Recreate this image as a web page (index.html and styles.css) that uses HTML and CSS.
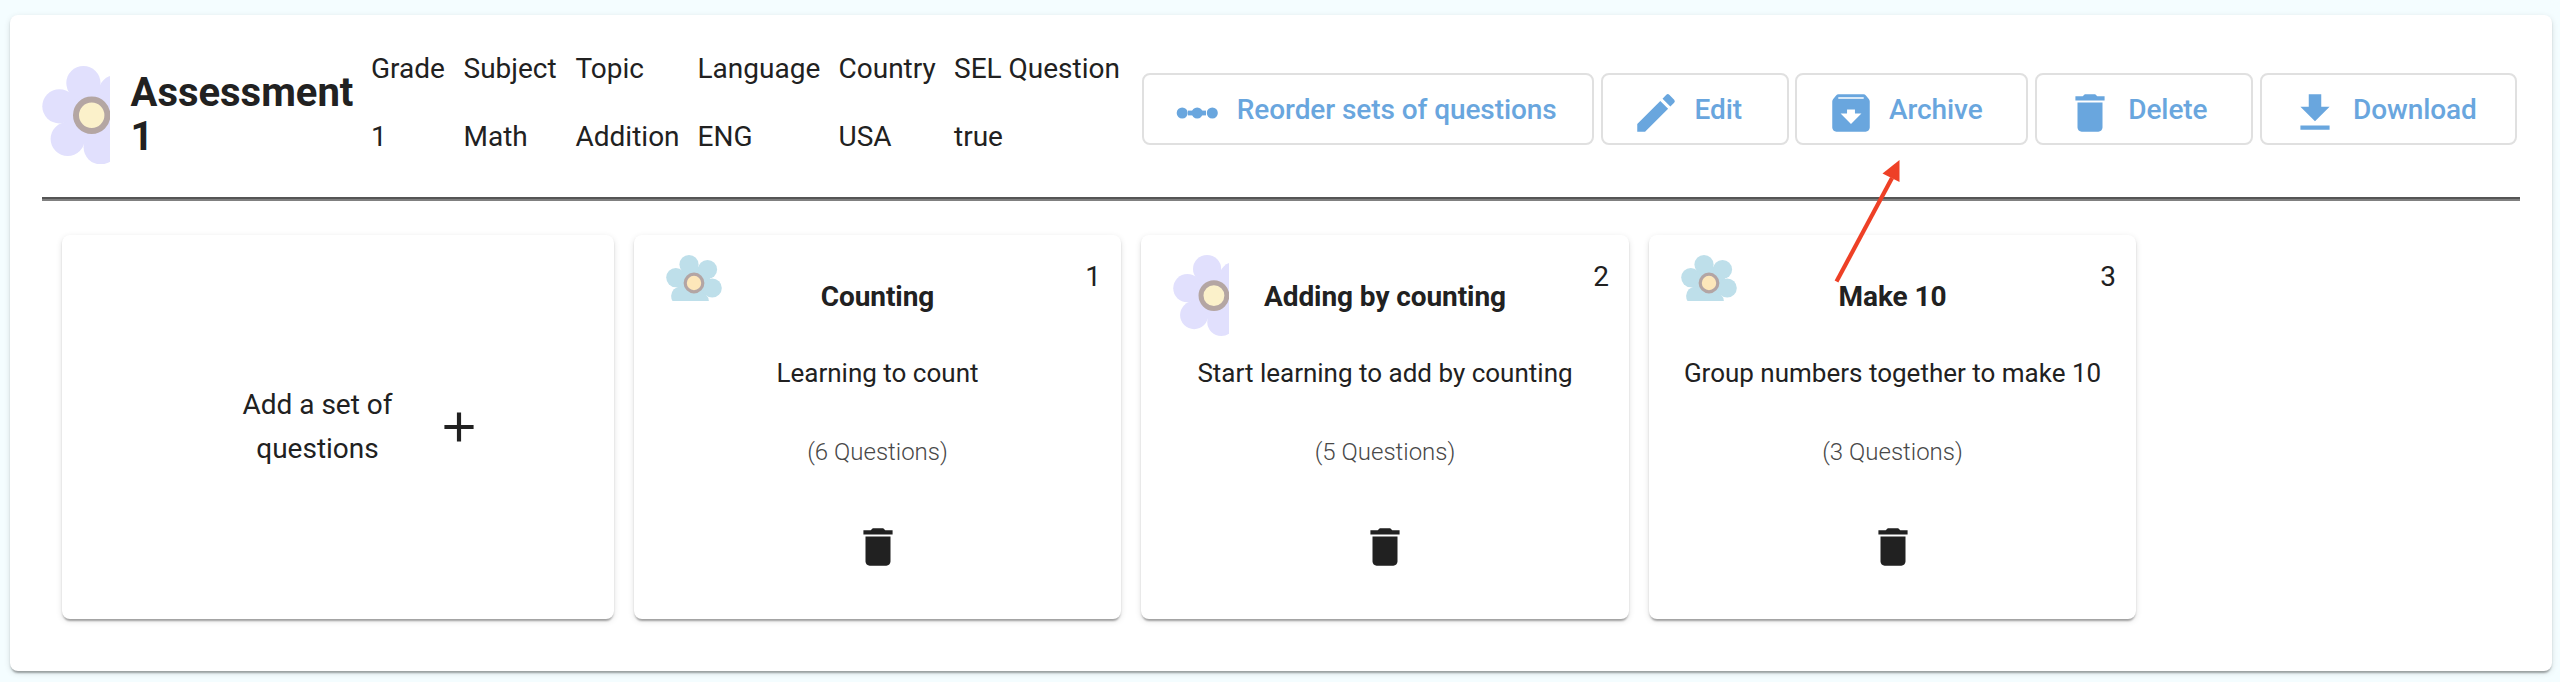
FILE: index.html
```
<!DOCTYPE html>
<html lang="en">
<head>
<meta charset="utf-8">
<title>Assessment 1</title>
<link rel="stylesheet" href="styles.css">
</head>
<body>
<svg class="defs" aria-hidden="true">
  <symbol id="flower-violet" viewBox="0 0 68 98.4">
    <g fill="#e1e0fd">
      <circle cx="49.7" cy="49.3" r="29"/>
      <circle cx="41.4" cy="17.1" r="17.1"/>
      <circle cx="17.4" cy="40.3" r="17.1"/>
      <circle cx="25.7" cy="73" r="17.1"/>
      <circle cx="58.7" cy="81.3" r="17.1"/>
      <circle cx="73.7" cy="26" r="17.1"/>
    </g>
    <circle cx="49.7" cy="49.3" r="15.7" fill="#fbf1ca" stroke="#b4a6a3" stroke-width="6"/>
  </symbol>
  <symbol id="flower-blue" viewBox="0 0 56 46">
    <g fill="#bedfea">
      <path d="M23 9.4 41.5 14.3 46.3 32.7 33.3 46.7H14.7L10 22.3z"/>
      <circle cx="23" cy="9.6" r="9.6"/>
      <circle cx="41.5" cy="14.5" r="9.6"/>
      <circle cx="46.2" cy="33" r="9.6"/>
      <circle cx="9.8" cy="22.6" r="9.6"/>
      <circle cx="14.7" cy="41" r="9.6"/>
      <circle cx="33.3" cy="46.5" r="9.6"/>
    </g>
    <circle cx="28" cy="28" r="8.8" fill="#fde7ba" stroke="#b3a5a4" stroke-width="3.2"/>
  </symbol>
  <symbol id="trash" viewBox="0 0 24 24"><path d="M6 19c0 1.1.9 2 2 2h8c1.1 0 2-.9 2-2V7H6v12zM19 4h-3.5l-1-1h-5l-1 1H5v2h14V4z"/></symbol>
</svg>

<main class="panel">
  <header class="header">
    <svg class="logo"><use href="#flower-violet"/></svg>
    <h1 class="title">Assessment 1</h1>
    <div class="facts">
      <span>Grade</span><span>Subject</span><span>Topic</span><span>Language</span><span>Country</span><span>SEL Question</span>
      <span>1</span><span>Math</span><span>Addition</span><span>ENG</span><span>USA</span><span>true</span>
    </div>
    <div class="actions">
      <button class="btn btn-reorder">
        <svg class="icon" viewBox="0 0 50 50"><path d="M16 22.6h18v4.8H16z"/><circle cx="10.2" cy="25" r="5.5"/><circle cx="25.2" cy="25" r="5.5"/><circle cx="40.3" cy="25" r="5.5"/></svg>
        Reorder sets of questions</button>
      <button class="btn btn-edit">
        <svg class="icon" viewBox="0 0 24 24"><path d="M3 17.25V21h3.75L17.81 9.94l-3.75-3.75L3 17.25zM20.71 7.04a1 1 0 0 0 0-1.41l-2.34-2.34a1 1 0 0 0-1.41 0l-1.83 1.83 3.75 3.75 1.83-1.83z"/></svg>
        Edit</button>
      <button class="btn btn-archive">
        <svg class="icon" viewBox="0 0 24 24"><path fill-rule="evenodd" d="M20.54 5.23l-1.39-1.68C18.88 3.21 18.47 3 18 3H6c-.47 0-.88.21-1.16.55L3.46 5.23C3.17 5.57 3 6.02 3 6.5V19c0 1.1.9 2 2 2h14c1.1 0 2-.9 2-2V6.5c0-.48-.17-.93-.46-1.27zM12 17.3L7 12.2H10.100V10.300h3.800v1.900H17L12 17.300zM5.900 4.400h12.200v.8H5.900z"/></svg>
        Archive</button>
      <button class="btn btn-delete"><svg class="icon"><use href="#trash"/></svg>Delete</button>
      <button class="btn btn-download">
        <svg class="icon" viewBox="0 0 24 24"><path d="M19 9h-4V3H9v6H5l7 7 7-7zM5 18v2h14v-2H5z"/></svg>
        Download</button>
    </div>
  </header>

  <section class="cards">
    <article class="card card-add">
      <p class="add-label">Add a set of questions</p>
      <svg class="icon" viewBox="0 0 24 24"><path d="M19 13h-6v6h-2v-6H5v-2h6V5h2v6h6v2z"/></svg>
    </article>
    <article class="card card-set">
      <svg class="badge badge-blue"><use href="#flower-blue"/></svg>
      <span class="order">1</span>
      <h2 class="name">Counting</h2>
      <p class="desc">Learning to count</p>
      <p class="count">(6 Questions)</p>
      <svg class="icon"><use href="#trash"/></svg>
    </article>
    <article class="card card-set">
      <svg class="badge badge-violet"><use href="#flower-violet"/></svg>
      <span class="order">2</span>
      <h2 class="name">Adding by counting</h2>
      <p class="desc">Start learning to add by counting</p>
      <p class="count">(5 Questions)</p>
      <svg class="icon"><use href="#trash"/></svg>
    </article>
    <article class="card card-set">
      <svg class="badge badge-blue"><use href="#flower-blue"/></svg>
      <span class="order">3</span>
      <h2 class="name">Make 10</h2>
      <p class="desc">Group numbers together to make 10</p>
      <p class="count">(3 Questions)</p>
      <svg class="icon"><use href="#trash"/></svg>
    </article>
  </section>
</main>

<svg class="pointer" viewBox="0 0 70 126"><path d="M4.5 122.5 60 19" stroke="#ee4026" stroke-width="4.2"/><path d="M67.5 1 50.5 14.5 67.5 23z" fill="#ee4026"/></svg>
</body>
</html>
```
FILE: styles.css
```
* { box-sizing: border-box; }

body {
  margin: 0;
  padding: 15px 8px 11px 10px;
  height: 682px;
  overflow: hidden;
  background: #f4fdff;
  color: #212121;
  font: 400 28px/32px Roboto, sans-serif;
}

h1, h2, p { margin: 0; }

.defs { position: absolute; width: 0; height: 0; }

.panel,
.card {
  background: #fff;
  border-radius: 8px;
  box-shadow: 0 4px 2px -2px rgba(0, 0, 0, .2), 0 2px 2px rgba(0, 0, 0, .14), 0 2px 6px rgba(0, 0, 0, .12);
}

.panel { height: 656px; padding: 0 32px; }

.header {
  display: flex;
  align-items: flex-start;
  height: 186px;
  padding-right: 3px;
  border-bottom: 4px solid #808080;
  border-image: linear-gradient(#555, #555 50%, #808080 50%) 0 0 4 0;
  border-width: 0 0 4px;
  border-image: none;
  border-bottom: 2px solid #808080;
  box-shadow: inset 0 -2px #555;
}

.logo { flex: none; width: 68px; height: 98.4px; margin-top: 51px; }

.title {
  flex: none;
  width: 223px;
  margin: 56px 0 0 20.5px;
  font-size: 40px;
  font-weight: 700;
  line-height: 44px;
}

.facts {
  display: grid;
  grid-template-columns: 92.5px 112px 122px 141px 115.5px auto;
  grid-auto-rows: 67.5px;
  line-height: 67.5px;
  margin: 20px 0 0 17.5px;
  white-space: nowrap;
}

.actions { display: flex; gap: 6.8px; margin: 58px 0 0 auto; }

.btn {
  display: flex;
  align-items: center;
  gap: 13.5px;
  height: 72px;
  padding: 1px 0 0 28px;
  border: 2px solid #e0e0e0;
  border-radius: 8px;
  background: #fff;
  color: #69a6de;
  font: 500 28px/67px Roboto, sans-serif;
  letter-spacing: -.08px;
  white-space: nowrap;
}

.btn .icon { margin-top: 6px; }
.btn-reorder { width: 452.5px; gap: 15px; }
.btn-edit { width: 187.5px; }
.btn-archive { width: 232.5px; padding-left: 29px; gap: 12.5px; }
.btn-delete { width: 218px; }
.btn-download { width: 257.5px; }

.icon { flex: none; width: 50px; height: 50px; fill: currentColor; }

.cards {
  display: grid;
  grid-template-columns: 552px 487px 488px 487px;
  gap: 20px;
  padding: 34px 20px 0;
}

.card { height: 384px; }

.card-add { display: flex; align-items: center; padding-left: 179px; }
.add-label { width: 153px; margin-right: 39.5px; line-height: 44px; text-align: center; }

.card-set {
  position: relative;
  display: flex;
  flex-direction: column;
  align-items: center;
  padding-top: 46px;
}

.badge { position: absolute; left: 32px; top: 20px; width: 56px; }
.badge-blue { height: 46px; }
.badge-violet { height: 81px; }
.order { position: absolute; right: 20px; top: 26px; }

.name { font-size: 28px; font-weight: 700; line-height: 32px; letter-spacing: -.08px; }
.desc { margin-top: 45px; font-size: 26px; line-height: 30px; }
.count { margin: 50px 0 56px; color: #484848; font-size: 24px; font-weight: 300; line-height: 28px; }

/* Callout arrow laid over the page */
.pointer { position: absolute; left: 1832px; top: 159px; width: 70px; height: 126px; fill: none; }
```
